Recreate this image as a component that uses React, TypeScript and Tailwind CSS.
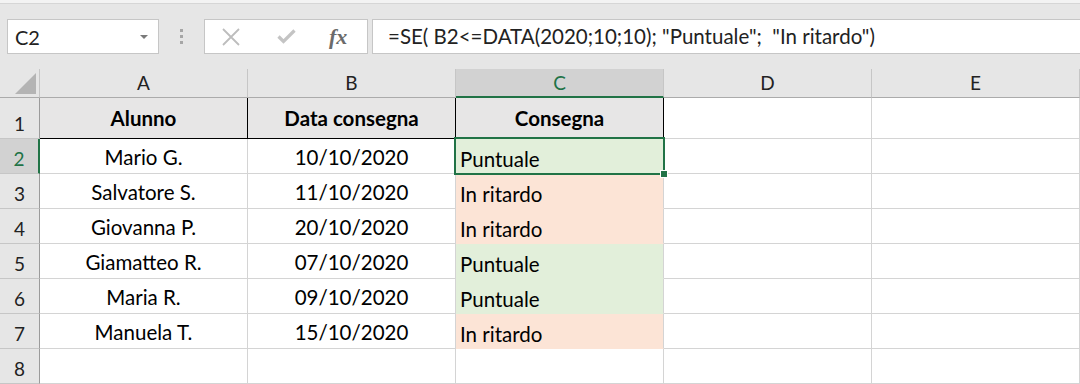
import React from "react";

type Row = { name: string; date: string; status: "Puntuale" | "In ritardo" };

const rows: Row[] = [
  { name: "Mario G.", date: "10/10/2020", status: "Puntuale" },
  { name: "Salvatore S.", date: "11/10/2020", status: "In ritardo" },
  { name: "Giovanna P.", date: "20/10/2020", status: "In ritardo" },
  { name: "Giamatteo R.", date: "07/10/2020", status: "Puntuale" },
  { name: "Maria R.", date: "09/10/2020", status: "Puntuale" },
  { name: "Manuela T.", date: "15/10/2020", status: "In ritardo" },
];

const font = { fontFamily: "Lato, Carlito, 'Open Sans', sans-serif" };

function FormulaBar() {
  return (
    <div className="h-[69px] bg-[#e6e6e6]">
      <div className="h-[4px] border-b border-[#d6d6d6] bg-[#f3f3f3]" />
      <div className="mt-[15px] flex h-[35px] items-stretch">
        <div className="ml-[7px] flex w-[152px] items-center justify-between border border-[#c6c6c6] bg-white pl-[7px] pr-[10px]">
          <span className="text-[20px] leading-none text-[#222]">C2</span>
          <svg width="8" height="4" viewBox="0 0 8 4">
            <path d="M0 0h8L4 4z" fill="#7a7a7a" />
          </svg>
        </div>
        <div className="flex w-[45px] flex-col items-center justify-center gap-[3px]">
          <span className="h-[3px] w-[3px] bg-[#a6a6a6]" />
          <span className="h-[3px] w-[3px] bg-[#a6a6a6]" />
          <span className="h-[3px] w-[3px] bg-[#a6a6a6]" />
        </div>
        <div className="flex w-[164px] items-center border border-[#c6c6c6] bg-white">
          <svg className="ml-[17px]" width="18" height="18" viewBox="0 0 18 18">
            <path d="M1 1l16 16M17 1L1 17" stroke="#bdbdbd" strokeWidth="1.8" />
          </svg>
          <svg className="ml-[37px]" width="19" height="15" viewBox="0 0 19 15">
            <path d="M1.5 7.5l5 5L17.5 1.5" stroke="#c4c4c4" strokeWidth="3.2" fill="none" />
          </svg>
          <span
            className="ml-[33px] text-[22px] font-bold italic leading-none text-[#6b6b6b]"
            style={{ fontFamily: "'Liberation Serif', 'DejaVu Serif', serif" }}
          >
            fx
          </span>
        </div>
        <div className="ml-[4px] flex flex-1 items-center border border-r-0 border-[#c6c6c6] bg-white pl-[15px]">
          <span className="whitespace-pre text-[20.5px] leading-none text-[#222]">
            =SE( B2&lt;=DATA(2020;10;10); "Puntuale";  "In ritardo")
          </span>
        </div>
      </div>
    </div>
  );
}

function ColHeader({ label, active }: { label: string; active?: boolean }) {
  return (
    <div
      className={
        active
          ? "flex items-end justify-center border-r border-b-2 border-r-[#c6c6c6] border-b-[#217346] bg-[#d2d2d2] pb-[2px] text-[19px] leading-[22px] text-[#217346]"
          : "flex items-end justify-center border-r border-b border-r-[#c6c6c6] border-b-[#ababab] bg-[#e6e6e6] pb-[3px] text-[19px] leading-[22px] text-[#222]"
      }
    >
      {label}
    </div>
  );
}

function RowHeader({ n, active }: { n: number; active?: boolean }) {
  return (
    <div
      className={
        active
          ? "flex items-end justify-center border-r-2 border-b border-r-[#217346] border-b-[#c6c6c6] bg-[#d2d2d2] pb-[3px] text-[19px] leading-[22px] text-[#217346]"
          : "flex items-end justify-center border-r border-b border-r-[#9b9b9b] border-b-[#c6c6c6] bg-[#e6e6e6] pb-[3px] text-[19px] leading-[22px] text-[#222]"
      }
    >
      {n}
    </div>
  );
}

function Cell({ children }: { children?: React.ReactNode }) {
  return (
    <div className="flex items-end justify-center border-r border-b border-[#d4d4d4] bg-white pb-[4px] text-[20.5px] leading-[23px] text-black">
      {children}
    </div>
  );
}

function StatusCell({ status, selected }: { status: Row["status"]; selected?: boolean }) {
  const ok = status === "Puntuale";
  return (
    <div
      className={
        ok
          ? "relative flex items-end border-r border-b border-r-[#d4d4d4] border-b-[#e2efda] bg-[#e2efda] pb-[2px] pl-[4px] text-[20.5px] leading-[23px] text-black"
          : "relative flex items-end border-r border-b border-r-[#d4d4d4] border-b-[#fce4d6] bg-[#fce4d6] pb-[2px] pl-[4px] text-[20.5px] leading-[23px] text-black"
      }
    >
      {status}
      {selected ? (
        <>
          <div className="absolute -top-[2px] -right-[2px] -bottom-[2px] -left-[2px] z-10 border-2 border-[#217346]" />
          <div className="absolute -right-[5px] -bottom-[5px] z-20 h-[8px] w-[8px] border border-white bg-[#217346]" />
        </>
      ) : null}
    </div>
  );
}

export default function App() {
  return (
    <div className="h-[384px] w-[1080px] overflow-hidden bg-white" style={font}>
      <FormulaBar />
      <div className="grid grid-cols-[40px_208px_208px_208px_208px_208px] grid-rows-[29px_41px_35px_35px_35px_35px_35px_35px_35px]">
        <div className="relative border-r border-b border-r-[#c6c6c6] border-b-[#ababab] bg-[#e6e6e6]">
          <svg className="absolute top-[4px] left-[15px]" width="22" height="21" viewBox="0 0 22 21">
            <path d="M21 0V21H0z" fill="#b4b4b4" />
          </svg>
        </div>
        <ColHeader label="A" />
        <ColHeader label="B" />
        <ColHeader label="C" active />
        <ColHeader label="D" />
        <ColHeader label="E" />

        <RowHeader n={1} />
        <div className="flex items-end justify-center border-r border-b border-black bg-[#e7e6e6] pb-[8px] text-[20.5px] leading-[23px] font-bold text-black">
          Alunno
        </div>
        <div className="flex items-end justify-center border-r border-b border-black bg-[#e7e6e6] pb-[8px] text-[20.5px] leading-[23px] font-bold text-black">
          Data consegna
        </div>
        <div className="flex items-end justify-center border-r border-b border-black bg-[#e7e6e6] pb-[8px] text-[20.5px] leading-[23px] font-bold text-black">
          Consegna
        </div>
        <Cell />
        <Cell />

        {rows.map((r, i) => (
          <React.Fragment key={r.name}>
            <RowHeader n={i + 2} active={i === 0} />
            <Cell>{r.name}</Cell>
            <Cell>{r.date}</Cell>
            <StatusCell status={r.status} selected={i === 0} />
            <Cell />
            <Cell />
          </React.Fragment>
        ))}

        <RowHeader n={8} />
        <Cell />
        <Cell />
        <Cell />
        <Cell />
        <Cell />
      </div>
    </div>
  );
}
